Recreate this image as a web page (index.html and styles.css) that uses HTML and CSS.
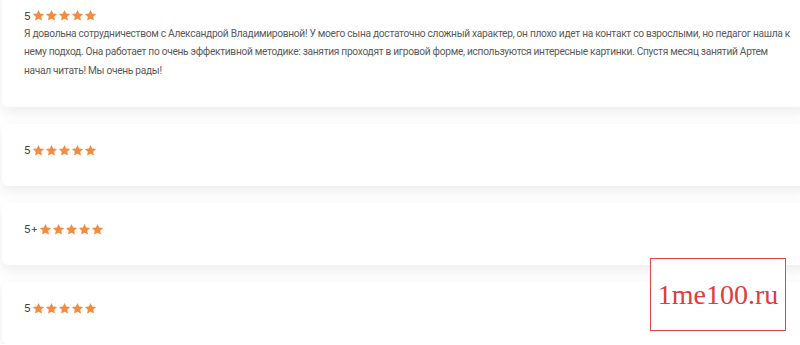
FILE: index.html
```html
<!DOCTYPE html>
<html lang="ru">

<head>
    <meta charset="UTF-8">
    <meta name="viewport" content="width=device-width, initial-scale=1.0">
    <title>Отзывы</title>
    <link rel="stylesheet" href="styles.css">
</head>

<body>
    <svg width="0" height="0" class="defs">
        <symbol id="star" viewBox="0 0 24 24">
            <path d="M12 1.8l3.1 6.6 7.2.9-5.3 5 1.4 7.1L12 17.9l-6.4 3.5 1.4-7.1-5.3-5 7.2-.9z" />
        </symbol>
    </svg>

    <div class="reviews">
        <div class="review first">
            <div class="rating">
                <span class="mark">5</span>
                <span class="stars">
                    <svg><use href="#star" /></svg><svg><use href="#star" /></svg><svg><use href="#star" /></svg><svg><use href="#star" /></svg><svg><use href="#star" /></svg>
                </span>
            </div>
            <p class="text">Я довольна сотрудничеством с Александрой Владимировной! У моего сына достаточно сложный характер, он плохо идет на контакт со взрослыми, но педагог нашла к нему подход. Она работает по очень эффективной методике: занятия проходят в игровой форме, используются интересные картинки. Спустя месяц занятий Артем начал читать! Мы очень рады!</p>
        </div>

        <div class="review">
            <div class="rating">
                <span class="mark">5</span>
                <span class="stars">
                    <svg><use href="#star" /></svg><svg><use href="#star" /></svg><svg><use href="#star" /></svg><svg><use href="#star" /></svg><svg><use href="#star" /></svg>
                </span>
            </div>
        </div>

        <div class="review">
            <div class="rating">
                <span class="mark">5+</span>
                <span class="stars">
                    <svg><use href="#star" /></svg><svg><use href="#star" /></svg><svg><use href="#star" /></svg><svg><use href="#star" /></svg><svg><use href="#star" /></svg>
                </span>
            </div>
        </div>

        <div class="review">
            <div class="rating">
                <span class="mark">5</span>
                <span class="stars">
                    <svg><use href="#star" /></svg><svg><use href="#star" /></svg><svg><use href="#star" /></svg><svg><use href="#star" /></svg><svg><use href="#star" /></svg>
                </span>
            </div>
        </div>
    </div>

    <div class="stamp">1me100.ru</div>
</body>

</html>
```

FILE: styles.css
```css
body {
    margin: 0;
    background-color: #ffffff;
    font-family: Inter, "Noto Sans", sans-serif;
    overflow: hidden;
}

.defs {
    position: absolute;
}

.reviews {
    display: flex;
    flex-direction: column;
    gap: 17px;
    margin-top: -11px;
    padding-left: 2px;
    margin-right: -10px;
}

.review {
    background-color: #ffffff;
    border-radius: 6px;
    box-shadow: 0 5px 14px rgba(0, 0, 0, 0.08);
    padding: 20px 10px 29px 22px;
    height: 13px;
}

.review.first {
    height: auto;
    padding-bottom: 26.5px;
}

.rating {
    display: flex;
    align-items: center;
    height: 13px;
}

.mark {
    font-size: 11px;
    color: #444444;
    margin-right: 1px;
}

.stars {
    display: flex;
}

.stars svg {
    width: 13px;
    height: 13px;
    fill: #f28c41;
}

.text {
    margin: 3px 0 0 0;
    max-width: 772px;
    font-family: Roboto, "Noto Sans", sans-serif;
    font-size: 10.2px;
    letter-spacing: -0.3px;
    line-height: 18.4px;
    color: #5a5a5a;
}

.stamp {
    position: absolute;
    left: 650px;
    top: 258px;
    width: 134px;
    height: 71px;
    border: 1px solid #e04848;
    background-color: #ffffff;
    color: #e03c3c;
    font-family: "Liberation Serif", serif;
    font-size: 28px;
    display: flex;
    align-items: center;
    justify-content: center;
}
```
